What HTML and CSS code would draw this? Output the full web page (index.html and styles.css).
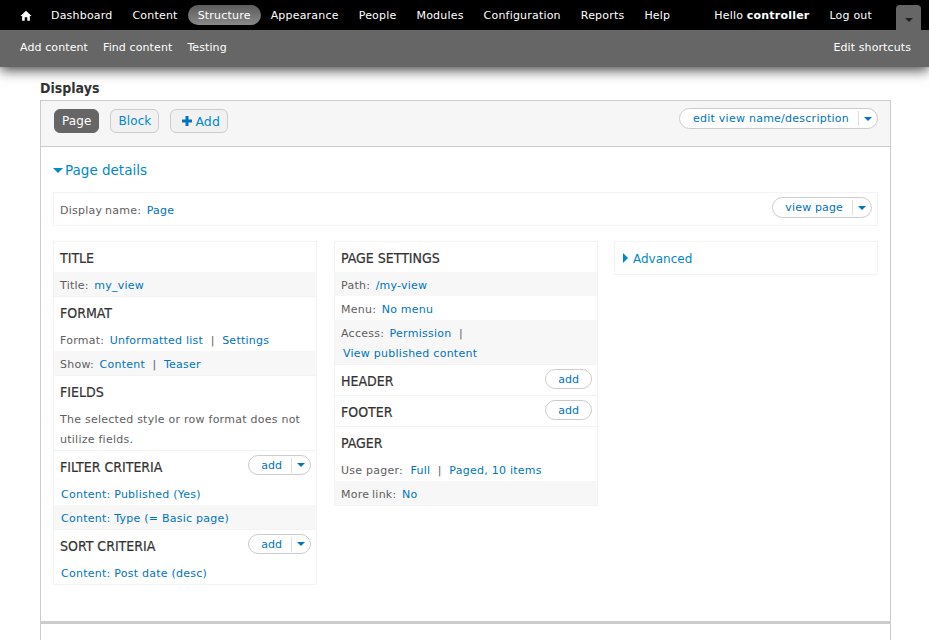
FILE: index.html
```html
<!DOCTYPE html>
<html lang="en">
<head>
<meta charset="UTF-8">
<meta name="viewport" content="width=device-width, initial-scale=1.0">
<title>Displays</title>
<link rel="stylesheet" href="styles.css">
</head>
<body>

<div class="toolbar">
    <div class="toolbar-main">
        <a class="home" href="#"><svg width="12" height="11" viewBox="0 0 14 12"><path fill="#fff" d="M7 0.5 L0.5 6.5 L2.5 6.5 L2.5 12 L5.5 12 L5.5 8 L8.5 8 L8.5 12 L11.5 12 L11.5 6.5 L13.5 6.5 Z"/></svg></a>
        <a href="#">Dashboard</a>
        <a href="#">Content</a>
        <a class="active" href="#">Structure</a>
        <a href="#">Appearance</a>
        <a href="#">People</a>
        <a href="#">Modules</a>
        <a href="#">Configuration</a>
        <a href="#">Reports</a>
        <a href="#">Help</a>
        <span class="spacer"></span>
        <span class="hello">Hello <b>controller</b></span>
        <a class="logout" href="#">Log out</a>
        <span class="drawer-toggle"><i class="arrow-down dark"></i></span>
    </div>
    <div class="toolbar-shortcuts">
        <a href="#">Add content</a>
        <a href="#">Find content</a>
        <a href="#">Testing</a>
        <span class="spacer"></span>
        <a href="#">Edit shortcuts</a>
    </div>
</div>

<div class="page">
    <h2 class="page-title">Displays</h2>
    <div class="displays">
        <div class="tabs">
            <a class="tab current" href="#">Page</a>
            <a class="tab" href="#">Block</a>
            <a class="tab tab-add" href="#"><svg width="10" height="10" viewBox="0 0 10 10"><path fill="#0074bd" d="M3.5 0h3v3.5H10v3H6.5V10h-3V6.5H0v-3h3.5z"/></svg>Add</a>
            <span class="spacer"></span>
            <span class="pill pill-top"><a href="#">edit view name/description</a><span class="pill-drop"><i class="arrow-down"></i></span></span>
        </div>

        <div class="details">
            <h3 class="details-title"><i class="arrow-down big"></i>Page details</h3>
            <div class="display-name">
                <span class="display-label"><span class="label">Display name:&nbsp; </span><a href="#">Page</a></span>
                <span class="pill pill-view"><a href="#">view page</a><span class="pill-drop"><i class="arrow-down"></i></span></span>
            </div>

            <div class="columns">
                <div class="column">
                    <div class="group first">
                        <div class="group-head">TITLE</div>
                        <div class="row odd"><span class="label">Title:&nbsp; </span><a href="#">my_view</a></div>
                    </div>
                    <div class="group">
                        <div class="group-head">FORMAT</div>
                        <div class="row"><span class="label">Format:&nbsp; </span><a href="#">Unformatted list</a>&nbsp; |&nbsp; <a href="#">Settings</a></div>
                        <div class="row odd"><span class="label">Show:&nbsp; </span><a href="#">Content</a>&nbsp; |&nbsp; <a href="#">Teaser</a></div>
                    </div>
                    <div class="group">
                        <div class="group-head">FIELDS</div>
                        <div class="row tall">The selected style or row format does not utilize fields.</div>
                    </div>
                    <div class="group">
                        <div class="group-head">FILTER CRITERIA
                            <span class="pill small"><a href="#">add</a><span class="pill-drop"><i class="arrow-down"></i></span></span>
                        </div>
                        <div class="row link"><a href="#">Content: Published (Yes)</a></div>
                        <div class="row link odd"><a href="#">Content: Type (= Basic page)</a></div>
                    </div>
                    <div class="group">
                        <div class="group-head">SORT CRITERIA
                            <span class="pill small"><a href="#">add</a><span class="pill-drop"><i class="arrow-down"></i></span></span>
                        </div>
                        <div class="row link"><a href="#">Content: Post date (desc)</a></div>
                    </div>
                </div>

                <div class="column column-mid">
                    <div class="group first">
                        <div class="group-head">PAGE SETTINGS</div>
                        <div class="row odd"><span class="label">Path:&nbsp; </span><a href="#">/my-view</a></div>
                        <div class="row"><span class="label">Menu:&nbsp; </span><a href="#">No menu</a></div>
                        <div class="row odd tall"><span class="label">Access:&nbsp; </span><a href="#">Permission</a>&nbsp; |<br><a class="indent" href="#">View published content</a></div>
                    </div>
                    <div class="group">
                        <div class="group-head">HEADER <span class="pill small single"><a href="#">add</a></span></div>
                    </div>
                    <div class="group">
                        <div class="group-head">FOOTER <span class="pill small single"><a href="#">add</a></span></div>
                    </div>
                    <div class="group">
                        <div class="group-head">PAGER</div>
                        <div class="row">Use pager:&nbsp; <a href="#">Full</a>&nbsp; |&nbsp; <a href="#">Paged, 10 items</a></div>
                        <div class="row odd"><span class="label">More link:&nbsp; </span><a href="#">No</a></div>
                    </div>
                </div>

                <div class="column column-right">
                    <div class="advanced"><i class="arrow-right"></i><a href="#">Advanced</a></div>
                </div>
            </div>
        </div>
        <div class="details-end"></div>
    </div>
</div>

</body>
</html>
```

FILE: styles.css
```css
html, body {
    margin: 0;
    padding: 0;
}

body {
    font-family: "DejaVu Sans", Verdana, sans-serif;
    font-size: 11px;
    letter-spacing: 0.25px;
    color: #5e5e5e;
    background-color: #fff;
    height: 640px;
    overflow: hidden;
}

a {
    color: #0074bd;
    text-decoration: none;
}

.spacer {
    flex: 1;
}

/* toolbar */
.toolbar {
    box-shadow: 0 3px 12px rgba(0, 0, 0, 0.75);
    background-color: #666;
}

.toolbar a {
    color: #fff;
}

.toolbar-main {
    display: flex;
    align-items: center;
    height: 30px;
    background-color: #000;
    padding: 0 57px 0 20px;
    color: #fff;
    letter-spacing: 0.2px;
}

.toolbar-main > a {
    height: 20px;
    padding: 0 10px;
    line-height: 21px;
    border-radius: 10px;
}

.toolbar-main .home {
    height: auto;
    padding: 0;
    margin-right: 9px;
    display: flex;
}

.toolbar-main .active {
    background: linear-gradient(#5c5c5c, #888);
}

.hello {
    margin-right: 20px;
    padding-top: 1px;
}

.toolbar-main .logout {
    padding: 0;
}

.drawer-toggle {
    position: absolute;
    top: 5px;
    right: 8px;
    width: 25px;
    height: 25px;
    background-color: #666;
    border-radius: 4px 4px 0 0;
    display: flex;
    align-items: center;
    justify-content: center;
}

.toolbar-shortcuts {
    display: flex;
    align-items: center;
    height: 35px;
    padding: 0 18px 2px 20px;
    background-color: #666;
    letter-spacing: 0.1px;
}

.toolbar-shortcuts a {
    margin-right: 15px;
}

.toolbar-shortcuts a:last-child {
    margin-right: 0;
}

/* arrows */
.arrow-down {
    display: inline-block;
    width: 0;
    height: 0;
    border-left: 4px solid transparent;
    border-right: 4px solid transparent;
    border-top: 4px solid #0074bd;
}

.arrow-down.dark {
    border-top-color: #222;
    margin-top: 4px;
}

.arrow-down.big {
    border-left-width: 5px;
    border-right-width: 5px;
    border-top-width: 5px;
    border-top-color: #0088cc;
    margin-right: 2px;
    vertical-align: 2px;
}

.arrow-right {
    display: inline-block;
    width: 0;
    height: 0;
    border-top: 5px solid transparent;
    border-bottom: 5px solid transparent;
    border-left: 5px solid #0088cc;
    margin-right: 5px;
}

/* content */
.page {
    padding: 13px 38px 0 40px;
}

.page-title {
    margin: 0;
    font-family: "DejaVu Sans Condensed", "DejaVu Sans", sans-serif;
    font-size: 14px;
    letter-spacing: 0;
    line-height: 16px;
    height: 20px;
    color: #333;
}

.displays {
    border: 1px solid #ccc;
    border-bottom: none;
    height: 540px;
}

.tabs {
    display: flex;
    align-items: flex-start;
    height: 37px;
    padding: 8px 12px 0 13px;
    background-color: #f6f6f6;
    border-bottom: 1px solid #ccc;
    font-size: 12px;
    letter-spacing: 0.1px;
}

.tab {
    display: flex;
    align-items: center;
    gap: 3px;
    height: 22px;
    padding: 0 7px;
    margin-right: 11px;
    border: 1px solid #ccc;
    border-radius: 6px;
    background-color: #f1f1f1;
    color: #0088cc;
}

.tab.current {
    background-color: #666;
    border-color: #666;
    color: #fff;
}

.tab-add {
    padding: 0 7px 0 11px;
    font-size: 12.5px;
}

.pill {
    display: inline-flex;
    align-items: center;
    height: 19px;
    border: 1px solid #ccc;
    border-radius: 11px;
    background-color: #fff;
    font-size: 11px;
    letter-spacing: 0.25px;
}

.pill-top {
    margin-top: -1px;
}

.pill a {
    padding: 0 9px 0 13px;
    line-height: 20px;
}

.pill-view {
    letter-spacing: 0.15px;
}

.pill-view a {
    padding-left: 12px;
}

.pill-drop {
    display: flex;
    align-items: center;
    justify-content: center;
    height: 15px;
    width: 18px;
    border-left: 1px solid #ddd;
}

.pill.small {
    float: right;
    font-weight: normal;
    font-family: "DejaVu Sans", sans-serif;
    -webkit-text-stroke: 0;
    height: 18px;
    margin-top: 4px;
    letter-spacing: 0;
}

.pill.small a {
    padding-left: 12px;
    line-height: 19px;
}

.pill.single a {
    padding: 0 12px 0 12px;
}

.details {
    padding: 13px 12px 0;
    height: 461px;
}

.details-title {
    margin: 0 0 12px;
    font-weight: normal;
    font-size: 13.5px;
    letter-spacing: 0;
    line-height: 20px;
    color: #0088cc;
}

.display-name {
    display: flex;
    align-items: center;
    justify-content: space-between;
    height: 32px;
    padding: 0 5px 0 6px;
    border: 1px solid #f3f3f3;
}

.display-label {
    padding-top: 2px;
}

.display-name .pill {
    margin-bottom: 3px;
}

.label {
    word-spacing: -1px;
}

.columns {
    display: flex;
    gap: 17px;
    margin-top: 15px;
    align-items: flex-start;
}

.column {
    width: 264px;
    box-sizing: border-box;
    border: 1px solid #f3f3f3;
}

.column-mid {
    margin-right: -1px;
}

.column-right {
    border: none;
}

.group {
    border-top: 1px solid #f3f3f3;
}

.group.first {
    border-top: none;
}

.group-head {
    height: 30px;
    line-height: 33px;
    padding: 0 5px 0 6px;
    font-family: "DejaVu Sans Condensed", "DejaVu Sans", sans-serif;
    font-size: 14px;
    -webkit-text-stroke: 0.2px #333;
    letter-spacing: 0;
    color: #333;
}

.row {
    height: 24px;
    line-height: 28px;
    padding: 0 6px;
}

.row.odd {
    background-color: #f7f7f7;
}

.row.link {
    padding-left: 7px;
}

.row.tall {
    box-sizing: border-box;
    height: 44px;
    line-height: 20px;
    padding-top: 4px;
}

.indent {
    margin-left: 2px;
}

.advanced {
    height: 32px;
    line-height: 35px;
    padding: 0 8px;
    border: 1px solid #f3f3f3;
    font-size: 12px;
    letter-spacing: 0;
}

.advanced a {
    color: #0088cc;
}

.details-end {
    border-top: 3px solid #ccc;
}
```
